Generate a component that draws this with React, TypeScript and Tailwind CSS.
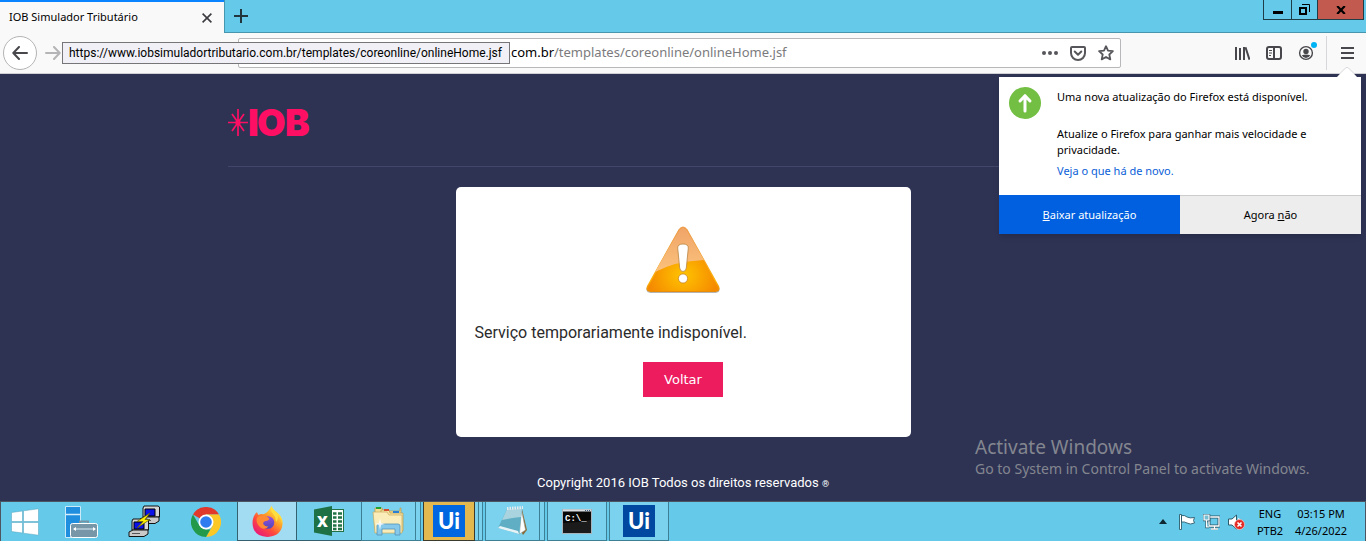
import type { ReactNode } from 'react';

const ADDRESS_DOMAIN = '.com.br';
const ADDRESS_PATH = '/templates/coreonline/onlineHome.jsf';

function TitleBar() {
  return (
    <header className="flex h-[33px] items-stretch bg-[#65c9ea]">
      <div className="flex w-[224px] items-center justify-between border-t-2 border-[#0a84ff] bg-[#f9f9fa] pr-3 pl-[9px]">
        <span className="text-[11px] text-black">IOB Simulador Tributário</span>
        <button type="button" aria-label="Fechar aba">
          <svg width="10" height="10" viewBox="0 0 10 10" stroke="#3c3c40" strokeWidth="1.6" fill="none">
            <path d="M.6.6l8.8 8.8M9.4.6L.6 9.4" />
          </svg>
        </button>
      </div>
      <div className="flex flex-1 items-start justify-between border-b border-l border-[#4796b0] pr-[2px]">
        <button type="button" aria-label="Nova aba" className="mt-[9px] ml-[9px]">
          <svg width="14" height="14" viewBox="0 0 14 14" stroke="#23353c" strokeWidth="2" fill="none">
            <path d="M7 0v14M0 7h14" />
          </svg>
        </button>
        <div className="flex h-5 border-r border-b border-l border-[#1f3d47]">
          <button type="button" aria-label="Minimizar" className="flex w-7 items-center justify-center border-r border-[#1f3d47]">
            <svg width="10" height="9" viewBox="0 0 10 9">
              <rect y="6" width="10" height="3" fill="#000" />
            </svg>
          </button>
          <button type="button" aria-label="Restaurar" className="flex w-[26px] items-center justify-center border-r border-[#1f3d47]">
            <svg width="11" height="11" viewBox="0 0 11 11" fill="none" stroke="#000">
              <path d="M3 .5h7.5V8" />
              <path d="M1 4h6v6H1z" strokeWidth="2" />
            </svg>
          </button>
          <button type="button" aria-label="Fechar" className="flex w-[45px] items-center justify-center bg-[#c35a50]">
            <svg width="10" height="8" viewBox="0 0 10 8" stroke="#000" strokeWidth="2.2">
              <path d="M1.2 0l7.6 8M8.8 0L1.2 8" />
            </svg>
          </button>
        </div>
      </div>
    </header>
  );
}

function Toolbar() {
  return (
    <div className="relative flex h-[41px] items-center border-b border-[#d0d0d4] bg-[#f9f9fa] pr-3 pl-[3px]">
      <button type="button" aria-label="Voltar uma página" className="flex size-[34px] items-center justify-center rounded-full border border-[#b4b4b6] bg-white">
        <svg width="16" height="14" viewBox="0 0 16 14" fill="none" stroke="#48484c" strokeWidth="2" strokeLinecap="round" strokeLinejoin="round">
          <path d="M15 7H1.5M7 1L1.3 7 7 13" />
        </svg>
      </button>
      <button type="button" aria-label="Avançar uma página" className="ml-2">
        <svg width="16" height="14" viewBox="0 0 16 14" fill="none" stroke="#b5b5b7" strokeWidth="2" strokeLinecap="round" strokeLinejoin="round">
          <path d="M1 7h13.500M9 1l5.700 6L9 13" />
        </svg>
      </button>
      <div className="mr-[113px] ml-[177px] flex h-[30px] flex-1 items-center rounded-xs border border-[#b8b8ba] bg-white pr-[6px]">
        <label htmlFor="address" className="flex w-[315px] shrink-0 justify-end text-[13px] text-black">
          {ADDRESS_DOMAIN}
        </label>
        <input
          id="address"
          type="text"
          defaultValue={ADDRESS_PATH}
          className="min-w-0 flex-1 bg-transparent text-[13px] text-[#7b7b7d] outline-none"
        />
        <div className="flex shrink-0 items-center gap-3">
          <button type="button" aria-label="Ações da página">
            <svg width="16" height="4" viewBox="0 0 16 4" fill="#57575b">
              <circle cx="2" cy="2" r="2" />
              <circle cx="8" cy="2" r="2" />
              <circle cx="14" cy="2" r="2" />
            </svg>
          </button>
          <button type="button" aria-label="Salvar no Pocket">
            <svg width="16" height="15" viewBox="0 0 16 15" fill="none" stroke="#57575b" strokeWidth="2" strokeLinecap="round" strokeLinejoin="round">
              <path d="M2 1h12a1 1 0 0 1 1 1v5a7 7 0 0 1-14 0V2a1 1 0 0 1 1-1z" />
              <path d="M4.700 5.500L8 8.700l3.300-3.200" />
            </svg>
          </button>
          <button type="button" aria-label="Adicionar aos favoritos">
            <svg width="16" height="16" viewBox="0 0 16 16" fill="none" stroke="#57575b" strokeWidth="1.800" strokeLinejoin="round">
              <path d="M8 1.200l2 4.500 4.900.5-3.600 3.300 1 4.900L8 12l-4.300 2.400 1-4.900L1.100 6.200 6 5.700z" />
            </svg>
          </button>
        </div>
      </div>
      <div className="flex items-center gap-4">
        <button type="button" aria-label="Biblioteca">
          <svg width="16" height="14" viewBox="0 0 16 14" fill="none" stroke="#48484c" strokeWidth="2">
            <path d="M2 1v13M6 2v12M10 1v13M11.500 1.300l4 12.400" />
          </svg>
        </button>
        <button type="button" aria-label="Barra lateral">
          <svg width="16" height="14" viewBox="0 0 16 14" fill="none" stroke="#48484c" strokeWidth="2">
            <rect x="1" y="1" width="14" height="12" rx="2" />
            <path d="M8 1v12" />
            <path d="M3 4.500h3M3 7h3M3 9.500h2" strokeWidth="1" />
          </svg>
        </button>
        <button type="button" aria-label="Conta" className="relative">
          <svg width="16" height="16" viewBox="0 0 16 16">
            <circle cx="8" cy="8" r="6.400" fill="none" stroke="#48484c" strokeWidth="1.400" />
            <circle cx="8" cy="6.400" r="2.700" fill="#48484c" />
            <path d="M3.800 10.200q4.200-1.600 8.400 0Q11 13 8 13t-4.200-2.800z" fill="#48484c" />
          </svg>
          <span className="absolute -top-[3px] -right-[3px] size-[6px] rounded-full bg-[#00b3f4]" />
        </button>
      </div>
      <div className="ml-3 h-[34px] w-px bg-[#d7d7db]" />
      <button type="button" aria-label="Abrir menu" className="ml-[14px]">
        <svg width="13" height="12" viewBox="0 0 13 12" stroke="#48484c" strokeWidth="2">
          <path d="M0 1h13M0 6h13M0 11h13" />
        </svg>
      </button>
      <div role="tooltip" className="absolute top-[9px] left-[62px] flex h-[22px] min-w-[448px] items-center border border-[#767678] bg-[#f0f0f6] px-[6px] font-['Roboto',sans-serif] text-[12px] whitespace-nowrap text-black">
        https://www.iobsimuladortributario.com.br/templates/coreonline/onlineHome.jsf
      </div>
    </div>
  );
}

function UpdatePopup() {
  return (
    <aside className="absolute top-[3px] right-[5px] w-[362px] bg-white text-[11px] leading-4 text-black shadow-md">
      <svg className="absolute -top-[10px] right-[4px]" width="20" height="11" viewBox="0 0 20 11">
        <path d="M0 10L8.500 1q1.500-1.200 3 0L20 10v1H0z" fill="#fff" />
        <path d="M3 6.500L8.500 1q1.500-1.200 3 0L17 6.500" fill="none" stroke="#d8d8dc" />
      </svg>
      <div className="flex h-[118px] gap-4 pr-9 pt-[10px] pl-[10px]">
        <svg width="32" height="32" viewBox="0 0 32 32" fill="none" className="shrink-0">
          <circle cx="16" cy="16" r="16" fill="#73bf43" />
          <path d="M16 24V9M11 14l5-5.300 5 5.300" stroke="#fff" strokeWidth="3" strokeLinecap="round" strokeLinejoin="round" />
        </svg>
        <div className="pt-[2px]">
          <p>Uma nova atualização do Firefox está disponível.</p>
          <p className="mt-[21px]">Atualize o Firefox para ganhar mais velocidade e privacidade.</p>
          <a href="#novidades" className="mt-[5px] block text-[#0a60d8]">Veja o que há de novo.</a>
        </div>
      </div>
      <div className="grid h-[39px] grid-cols-2">
        <button type="button" className="bg-[#0060df] text-white"><u>B</u>aixar atualização</button>
        <button type="button" className="border-t border-[#ccc] bg-[#ededed]">Agora <u>n</u>ão</button>
      </div>
    </aside>
  );
}

function Logo() {
  return (
    <svg width="84" height="32" viewBox="0 0 84 32" role="img" aria-label="IOB" className="overflow-visible">
      <g stroke="#ff0f64" strokeWidth="1.700" fill="none">
        <path d="M10 2v27M0 15.500h20M4 7l12 17M16 7L4 24" />
      </g>
      <circle cx="10" cy="15.500" r="2.600" fill="#ff0f64" />
      <text x="20 29 57" y="29" fontFamily="Inter, sans-serif" fontWeight="900" fontSize="37" fill="#ff0f64">IOB</text>
    </svg>
  );
}

function WarningIcon() {
  return (
    <svg width="78" height="70" viewBox="0 0 78 70">
      <defs>
        <linearGradient id="warnBody" x1="0" y1="0" x2="0" y2="1">
          <stop offset="0" stopColor="#f0a050" />
          <stop offset=".55" stopColor="#f9a51e" />
          <stop offset=".85" stopColor="#fdb407" />
          <stop offset="1" stopColor="#e88a08" />
        </linearGradient>
        <linearGradient id="warnGloss" x1="0" y1="0" x2="0" y2="1">
          <stop offset="0" stopColor="#f0a468" />
          <stop offset="1" stopColor="#fbc27c" />
        </linearGradient>
        <radialGradient id="warnGlow" cx=".5" cy=".75" r=".5">
          <stop offset="0" stopColor="#ffc400" />
          <stop offset="1" stopColor="#f58a00" />
        </radialGradient>
      </defs>
      <path d="M34.500 5Q39 -1 43.500 5L75 62q2 5.500-3.500 6H6.500Q1 67.500 3 62z" fill="#777" opacity=".55" />
      <path d="M34.500 4.500Q39-1.500 43.500 4.500L75 61q2 5.500-3.500 6H6.500Q1 66.500 3 61z" fill="url(#warnBody)" />
      <path d="M35 5.500Q39 0 43 5.500L73.500 61q2 4.500-2.500 5H7q-4.500-.5-2.500-5z" fill="url(#warnGlow)" />
      <path d="M35 5.500Q39 0 43 5.500L60 35Q32 36 11 47z" fill="url(#warnGloss)" />
      <path d="M33.700 23q0-4 5.300-4t5.300 4l-2 20q-.5 3.500-3.300 3.500T35.700 43z" fill="#fff" stroke="#b98442" strokeWidth=".8" />
      <circle cx="39" cy="53.500" r="4.600" fill="#fff" stroke="#c78325" strokeWidth=".8" />
    </svg>
  );
}

function ServicePage() {
  return (
    <main className="relative flex flex-1 flex-col items-center bg-[#2e3354] pb-2">
      <div className="h-[93px] w-full max-w-[910px] border-b border-[#42466a] pt-[33px]">
        <Logo />
      </div>
      <section className="mt-5 flex w-full max-w-[455px] flex-col items-center rounded-[5px] bg-white px-[19px] pt-[38px] pb-10 font-['Roboto',sans-serif]">
        <WarningIcon />
        <p className="mt-[26px] mb-[17px] w-full text-[16px] leading-6 text-[#2b2b2b]">Serviço temporariamente indisponível.</p>
        <button type="button" className="h-[35px] w-20 bg-[#ed1c5f] font-['DejaVu_Sans',sans-serif] text-[13px] text-white">Voltar</button>
      </section>
      <footer className="mt-[37px] font-['Roboto',sans-serif] text-[13px] leading-[18px] text-white">
        Copyright 2016 IOB Todos os direitos reservados <span className="text-[9px]">®</span>
      </footer>
      <UpdatePopup />
      <div className="absolute right-[51px] bottom-[22px] w-[340px] whitespace-nowrap text-[#83868f]">
        <p className="text-[19px] leading-6">Activate Windows</p>
        <p className="text-[14px] leading-5">Go to System in Control Panel to activate Windows.</p>
      </div>
    </main>
  );
}

function StartIcon() {
  return (
    <svg width="28" height="28" viewBox="0 0 28 28" fill="#fff" stroke="#4fa3bd" strokeWidth=".5">
      <path d="M.5 4.500L11.500 3v10.500H.5zM12.500 2.800L27.500.8v12.700h-15zM.5 14.500h11V25L.5 23.500zM12.500 14.500h15v12.700l-15-2z" />
    </svg>
  );
}

function ServerIcon() {
  return (
    <svg width="33" height="32" viewBox="0 0 33 32">
      <path d="M.5.500h15v31H.5z" fill="#1f8ede" stroke="#c9eaf6" />
      <path d="M1 8.500h14" stroke="#d7effa" strokeWidth="1.500" />
      <path d="M15 18v-2.500h8V18" fill="none" stroke="#7593a5" strokeWidth="2" />
      <rect x="5.500" y="17.500" width="27" height="14" rx="2" fill="#7796a8" stroke="#fff" />
      <path d="M9 23h21" stroke="#dcecf4" />
      <path d="M8 23l3-2v4zM31 23l-3-2v4z" fill="#fff" />
    </svg>
  );
}

function PuttyIcon() {
  const computer = (
    <>
      <path d="M4 0h14l1.500 1v10H3V2z" fill="#d6d6d6" stroke="#111" />
      <path d="M5 3h10v7H5z" fill="#0b12e8" stroke="#000" />
      <path d="M0 13l4-2h15v4l-4 2.500H0z" fill="#c9c9c9" stroke="#111" />
      <path d="M3 14.500h8" stroke="#555" />
    </>
  );
  return (
    <svg width="32" height="33" viewBox="0 0 32 33">
      <g transform="translate(12 1)">{computer}</g>
      <g transform="translate(1 14)">{computer}</g>
      <path d="M22 8l-13 8.500h6L9 23l13-8.500h-5z" fill="#ffee00" stroke="#5c5800" strokeWidth=".7" />
    </svg>
  );
}

function ChromeIcon() {
  return (
    <svg width="30" height="30" viewBox="0 0 30 30">
      <path d="M15 15L2 7.500A15 15 0 0 1 28 7.500H15z" fill="#e0392c" />
      <path d="M15 7.500h13A15 15 0 0 1 15 30l6.500-11.300z" fill="#fcc826" />
      <path d="M2 7.500l6.500 11.300L15 22.500h4.300L15 30A15 15 0 0 1 2 7.500z" fill="#239a4b" />
      <circle cx="15" cy="15" r="7.500" fill="#fff" />
      <circle cx="15" cy="15" r="5.800" fill="#2f7cf0" />
    </svg>
  );
}

function FirefoxIcon() {
  return (
    <svg width="31" height="31" viewBox="0 0 31 31">
      <defs>
        <linearGradient id="foxBody" x1=".85" y1=".1" x2=".2" y2=".95">
          <stop offset="0" stopColor="#fff04a" />
          <stop offset=".35" stopColor="#ffa127" />
          <stop offset=".65" stopColor="#ff4a3d" />
          <stop offset="1" stopColor="#e81a78" />
        </linearGradient>
        <linearGradient id="foxGlobe" x1="0" y1="0" x2="0" y2="1">
          <stop offset="0" stopColor="#9a4fe0" />
          <stop offset="1" stopColor="#4c48b8" />
        </linearGradient>
      </defs>
      <path d="M19.500 0q1 3.500 5 6 6.500 5.500 6 12-1 12-15 13Q1 30.500.5 17 .5 10 5 6q.3 1.700 1.500 3 2-1.200 4.500-.8Q16 7 19.500 0z" fill="url(#foxBody)" />
      <circle cx="16" cy="16.500" r="6.300" fill="url(#foxGlobe)" />
      <path d="M4.500 13Q6 9 11 9.500q4 .2 6.500 3.500-1 2-4.500 2.200-2.500 1-1.500 3.300 2 2.500 5 2-4 4-8 1-4-3-4-8.500z" fill="#ff8a33" />
      <path d="M19.500 0q-2 3 1 7 4 4.500 3.500 9 3-3 1.500-7 5 5 4.500 10 1.500-7-4-11.500Q20.500 4 19.500 0z" fill="#ffde3f" />
    </svg>
  );
}

function ExcelIcon() {
  return (
    <svg width="31" height="30" viewBox="0 0 31 30">
      <rect x="16.500" y="3.500" width="13" height="22" fill="#fff" stroke="#217346" />
      <path d="M19 7.500h3.500M24 7.500h4M19 11.500h3.500M24 11.500h4M19 15.500h3.500M24 15.500h4M19 19.500h3.500M24 19.500h4M19 23h3.500M24 23h4" stroke="#217346" strokeWidth="2.300" />
      <path d="M0 3.500L18 0v30L0 26.500z" fill="#1e7145" />
      <text x="8.500" y="20.500" textAnchor="middle" fontFamily="Open Sans, sans-serif" fontSize="15" fontWeight="800" fill="#fff">X</text>
    </svg>
  );
}

function FolderIcon() {
  return (
    <svg width="33" height="30" viewBox="0 0 33 30">
      <path d="M3 2h7l1 3h17V2h1v20H3z" fill="#f3dd94" stroke="#b99a4b" strokeWidth=".7" />
      <rect x="4" y="1" width="5" height="2" fill="#21a331" />
      <path d="M9 4h8l1 3h13v18H9z" fill="#f7e4a4" stroke="#b99a4b" strokeWidth=".7" />
      <rect x="12" y="3" width="5" height="2" fill="#d44b2d" />
      <rect x="21" y="5" width="6" height="2" fill="#2a7fd4" />
      <path d="M1 6h14l2 3h13v18H3z" fill="#fbedb9" stroke="#c6a95a" strokeWidth=".7" />
      <path d="M5 29v-9q0-2 2-2h19q2 0 2 2v9h-5v-6H10v6z" fill="#86c9ea" stroke="#5794b8" strokeWidth=".8" />
      <path d="M8 12l1 5 4 1-4 1-1 5-1-5-4-1 4-1z" fill="#fff" opacity=".85" />
    </svg>
  );
}

function NotepadIcon() {
  return (
    <svg width="32" height="30" viewBox="0 0 32 30">
      <path d="M25 3l5 21-4 5-3-6z" fill="#8b6a34" />
      <path d="M24.500 4l4 20-6 4z" fill="#fff" stroke="#899" strokeWidth=".5" />
      <path d="M10 3l15-1-3 26L1 22z" fill="#5faec4" />
      <path d="M10 3l15-1-1 9Q14 12 5 14z" fill="#a9d3de" />
      <path d="M1 22l21 6-1-3L3 20z" fill="#e6f4f7" />
      <path d="M10 2.500l16-1" stroke="#e8ecee" strokeWidth="3" strokeDasharray="1.500 1" />
    </svg>
  );
}

function TerminalIcon() {
  return (
    <svg width="30" height="25" viewBox="0 0 30 25">
      <rect x=".5" y=".5" width="29" height="24" fill="#080808" stroke="#a9b4ba" />
      <path d="M1 1.500h28" stroke="#d9dee2" strokeWidth="2" />
      <path d="M23 1.500h5" stroke="#3d5c84" strokeDasharray="1 1" />
      <text x="3" y="12" fontFamily="Liberation Mono, monospace" fontSize="9" fontWeight="700" fill="#fff">C:\_</text>
      <path d="M1 14q14 0 28-3v13H1z" fill="#fff" opacity=".08" />
    </svg>
  );
}

function UiPathIcon({ tone }: { tone: string }) {
  return (
    <span className={`flex size-8 items-center justify-center font-['Lato',sans-serif] text-[22px] leading-none font-black text-white ${tone}`}>
      Ui
    </span>
  );
}

function TaskButton({ label, className, children }: { label: string; className: string; children: ReactNode }) {
  return (
    <button type="button" aria-label={label} className={`flex items-center justify-center ${className}`}>
      {children}
    </button>
  );
}

function Tray() {
  return (
    <div className="ml-auto flex items-center pr-[17px]">
      <div className="flex items-center gap-2 pr-[11px]">
        <button type="button" aria-label="Mostrar ícones ocultos" className="mr-1">
          <svg width="8" height="5" viewBox="0 0 8 5"><path d="M4 0l4 5H0z" fill="#0e2730" /></svg>
        </button>
        <svg width="16" height="16" viewBox="0 0 16 16" fill="#fff" stroke="#2c5b6b" strokeWidth=".9">
          <path d="M.5.500h2v15h-2zM2.500 1.500Q6 1 8 3q3 1.500 7.500.5l-1 3 1 2.500Q11 11 8 9 5.500 7.500 2.500 8z" />
        </svg>
        <svg width="17" height="16" viewBox="0 0 17 16" fill="none">
          <path d="M6 3h10v9H6z" stroke="#2c5b6b" strokeWidth="3" />
          <path d="M8 15h7M11.500 12v3" stroke="#2c5b6b" strokeWidth="2.500" />
          <path d="M6 3h10v9H6zM8 15h7M11.500 12v3" stroke="#fff" strokeWidth="1.300" />
          <path d="M1 1h5v5H1zM3.500 6v7H6" stroke="#2c5b6b" strokeWidth="2.500" />
          <path d="M1 1h5v5H1zM3.500 6v7H6" fill="#75bdd3" stroke="#fff" strokeWidth="1.200" />
        </svg>
        <svg width="17" height="16" viewBox="0 0 17 16">
          <path d="M.5 5H4l4.500-4v14L4 11H.5z" fill="#fff" stroke="#2c5b6b" />
          <path d="M10.500 4q2 2 1 6" fill="none" stroke="#fff" />
          <circle cx="11.500" cy="10.500" r="5" fill="#e32922" stroke="#f6c9c5" strokeWidth=".7" />
          <path d="M9.500 8.500l4 4M13.500 8.500l-4 4" stroke="#fff" strokeWidth="1.600" />
        </svg>
      </div>
      <div className="w-[28px] text-center text-[11px] leading-[17px] text-black">
        <p>ENG</p>
        <p>PTB2</p>
      </div>
      <div className="ml-[10px] w-[54px] text-center text-[11px] leading-[17px] whitespace-nowrap text-black">
        <p>03:15 PM</p>
        <p>4/26/2022</p>
      </div>
    </div>
  );
}

function Taskbar() {
  return (
    <footer className="flex h-10 border-t border-r border-l border-[#4c5560] bg-[#65c9ea]">
      <TaskButton label="Iniciar" className="w-12"><StartIcon /></TaskButton>
      <TaskButton label="Gerenciador do Servidor" className="w-16"><ServerIcon /></TaskButton>
      <TaskButton label="PuTTY" className="w-[62px]"><PuttyIcon /></TaskButton>
      <TaskButton label="Google Chrome" className="w-[62px]"><ChromeIcon /></TaskButton>
      <TaskButton label="Firefox" className="w-[60px] border-x border-b border-[#35606f] bg-[#a1dcf2]"><FirefoxIcon /></TaskButton>
      <TaskButton label="Excel" className="w-16 border-b border-[#35606f] bg-[#74cfec]"><ExcelIcon /></TaskButton>
      <TaskButton label="Explorador de Arquivos" className="w-[55px] border-x border-b border-[#3d7f94] bg-[#7ad2ee]"><FolderIcon /></TaskButton>
      <div className="w-[5px] border-r border-b border-[#3d7f94] bg-[#7ad2ee]" />
      <TaskButton label="UiPath Studio" className="ml-[2px] w-[52px] border border-t-0 border-[#3c3a2c] bg-[#e2b84f]"><UiPathIcon tone="bg-[#0067e0]" /></TaskButton>
      <div className="w-1 border-r border-b border-[#3d7f94] bg-[#7ad2ee]" />
      <div className="w-1 border-r border-b border-[#3d7f94] bg-[#7ad2ee]" />
      <TaskButton label="Bloco de Notas" className="ml-[2px] w-[55px] border-x border-b border-[#3d7f94] bg-[#7ad2ee]"><NotepadIcon /></TaskButton>
      <div className="w-[5px] border-r border-b border-[#3d7f94] bg-[#7ad2ee]" />
      <TaskButton label="Prompt de Comando" className="ml-[2px] w-[60px] border-x border-b border-[#3d7f94] bg-[#7ad2ee]"><TerminalIcon /></TaskButton>
      <TaskButton label="UiPath Assistant" className="ml-[2px] w-[60px] border-x border-b border-[#3d7f94] bg-[#7ad2ee]"><UiPathIcon tone="bg-[#0048a0]" /></TaskButton>
      <Tray />
    </footer>
  );
}

export default function App() {
  return (
    <div className="flex min-h-screen flex-col font-['Noto_Sans',sans-serif]">
      <TitleBar />
      <Toolbar />
      <ServicePage />
      <Taskbar />
    </div>
  );
}
